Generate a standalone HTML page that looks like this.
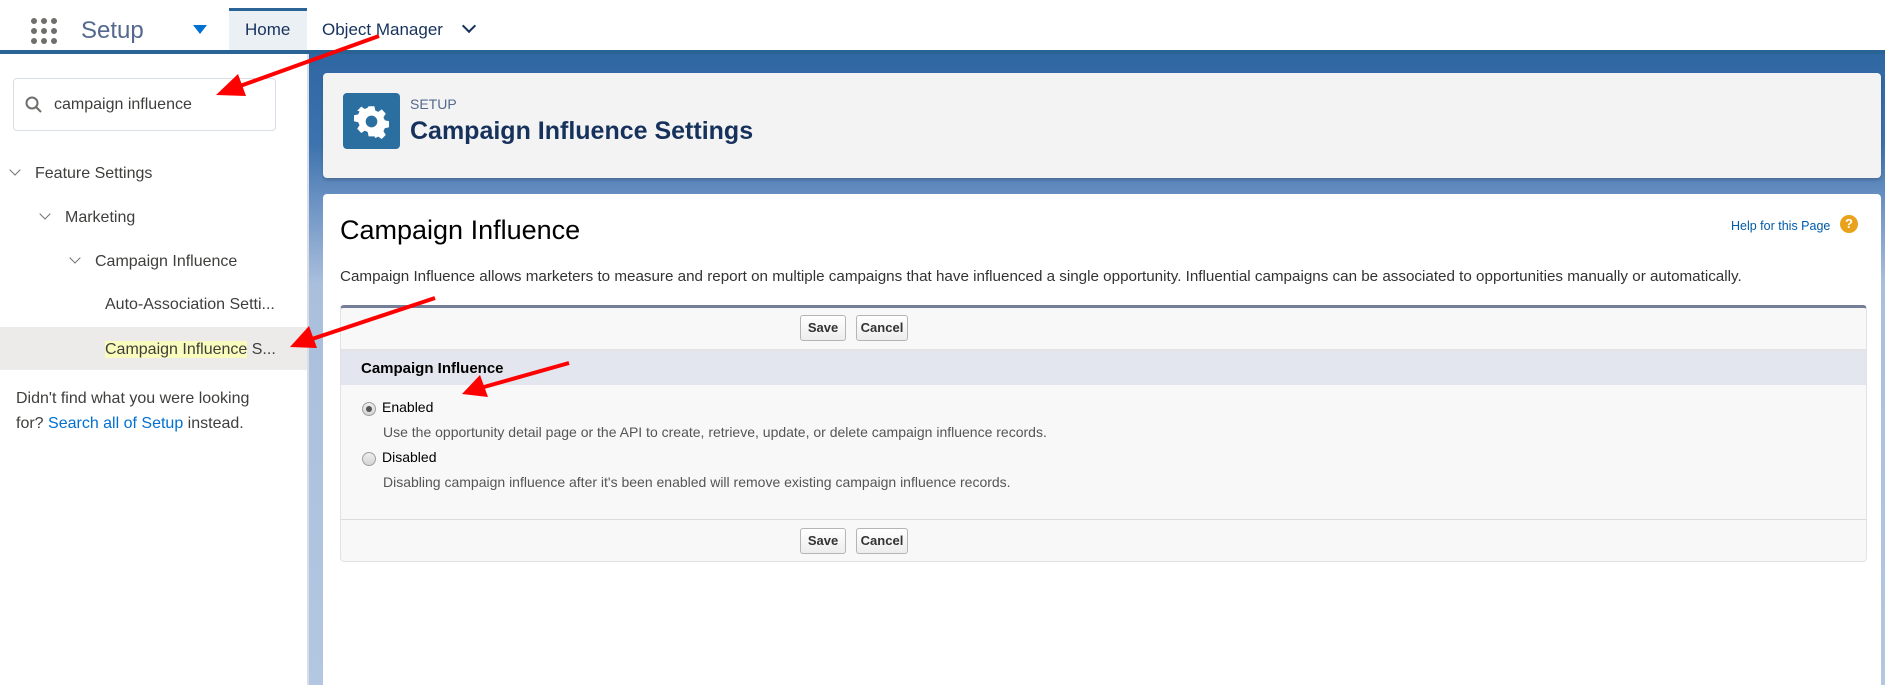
<!DOCTYPE html>
<html><head><meta charset="utf-8"><style>
*{margin:0;padding:0;box-sizing:border-box}
body{width:1885px;height:685px;overflow:hidden;background:#fff;font-family:"Liberation Sans",Arial,sans-serif;position:relative}
.abs{position:absolute}
.nav{left:0;top:0;width:1885px;height:54px;background:#fff;border-bottom:4px solid #2a6496}
.dot{position:absolute;width:6px;height:6px;border-radius:50%;background:#706e6b}
.side{left:0;top:54px;width:307px;height:631px;background:#fff}
.t{position:absolute;font-size:16px;color:#3e3e3c;white-space:nowrap}
.chev{position:absolute;width:8px;height:8px;border-right:1.5px solid #706e6b;border-bottom:1.5px solid #706e6b;transform:rotate(45deg)}
.bg{left:309px;top:54px;width:1576px;height:631px;background:linear-gradient(#2f67a3 0,#3d73ae 90px,#6d93c4 150px,#a9bfdc 230px,#b3c7e0 631px)}
.btn{position:absolute;height:26px;border:1px solid #b5b5b5;border-radius:3px;background:linear-gradient(#fff,#ededed);font-size:13px;font-weight:bold;color:#333;text-align:center;line-height:24px}
.radio{position:absolute;width:14px;height:14px;border-radius:50%;border:1px solid #a0a0a0;background:linear-gradient(#eee,#d5d5d5)}
.g{position:absolute;font-size:14px;color:#555;white-space:nowrap}
</style></head><body>
<div class="abs nav">
  <div class="dot" style="left:31px;top:18px"></div><div class="dot" style="left:41px;top:18px"></div><div class="dot" style="left:51px;top:18px"></div>
  <div class="dot" style="left:31px;top:28px"></div><div class="dot" style="left:41px;top:28px"></div><div class="dot" style="left:51px;top:28px"></div>
  <div class="dot" style="left:31px;top:38px"></div><div class="dot" style="left:41px;top:38px"></div><div class="dot" style="left:51px;top:38px"></div>
  <div class="abs" style="left:81px;top:17px;font-size:24px;color:#54698d">Setup</div>
  <div class="abs" style="left:193px;top:25px;width:0;height:0;border-left:7px solid transparent;border-right:7px solid transparent;border-top:9px solid #0070d2"></div>
  <div class="abs" style="left:229px;top:8px;width:78px;height:42px;background:#eaf0f4;border-top:3px solid #2a6496"></div>
  <div class="abs" style="left:245px;top:20px;font-size:17px;color:#16325c">Home</div>
  <div class="abs" style="left:322px;top:20px;font-size:17px;color:#16325c">Object Manager</div>
  <div class="abs" style="left:464px;top:21px;width:10px;height:10px;border-right:2px solid #16325c;border-bottom:2px solid #16325c;transform:rotate(45deg)"></div>
</div>
<div class="abs side">
  <div class="abs" style="left:13px;top:24px;width:263px;height:53px;border:1px solid #d8dde6;border-radius:4px"></div>
  <svg class="abs" style="left:25px;top:42px" width="18" height="18" viewBox="0 0 18 18"><circle cx="7" cy="7" r="5.5" fill="none" stroke="#706e6b" stroke-width="2"/><path d="M11 11l5 5" stroke="#706e6b" stroke-width="2"/></svg>
  <div class="t" style="left:54px;top:42px">campaign influence</div>
  <div class="chev" style="left:11px;top:112px"></div><div class="t" style="left:35px;top:111px">Feature Settings</div>
  <div class="chev" style="left:41px;top:156px"></div><div class="t" style="left:65px;top:155px">Marketing</div>
  <div class="chev" style="left:71px;top:200px"></div><div class="t" style="left:95px;top:199px">Campaign Influence</div>
  <div class="t" style="left:105px;top:242px">Auto-Association Setti...</div>
  <div class="abs" style="left:0;top:273px;width:307px;height:43px;background:#ecebea"></div>
  <div class="t" style="left:105px;top:287px"><span style="background:#f9fcbd">Campaign Influence</span> S...</div>
  <div class="t" style="left:16px;top:332px;line-height:25px">Didn't find what you were looking<br>for? <span style="color:#0070d2">Search all of Setup</span> instead.</div>
</div>
<div class="abs bg"></div>
<div class="abs" style="left:307px;top:54px;width:2px;height:631px;background:#d8dde6"></div>
<div class="abs" style="left:323px;top:73px;width:1558px;height:105px;background:#f3f3f3;border-radius:4px;box-shadow:0 2px 3px rgba(0,0,0,.2)"></div>
<div class="abs" style="left:343px;top:93px;width:57px;height:56px;background:#2a6f9f;border-radius:4px"></div>
<svg class="abs" style="left:354px;top:104px" width="35" height="35" viewBox="0 0 24 24"><path fill="#fff" d="M10 2h4l.6 2.8 2 .9 2.4-1.6 2.8 2.8-1.6 2.4.9 2 2.9.7v4l-2.9.6-.9 2 1.6 2.4-2.8 2.8-2.4-1.6-2 .9L14 22h-4l-.6-2.9-2-.9L5 19.8 2.200 17l1.6-2.4-.9-2L0 12v-4l2.9-.6.9-2L2.2 5 5 2.2l2.4 1.6 2-.9z" transform="translate(0 -.5) scale(1 1.03)"/><circle cx="12" cy="12" r="4" fill="#2a6f9f"/></svg>
<div class="abs" style="left:410px;top:96px;font-size:14px;color:#54698d">SETUP</div>
<div class="abs" style="left:410px;top:117px;font-size:25px;font-weight:bold;color:#16325c">Campaign Influence Settings</div>
<div class="abs" style="left:323px;top:194px;width:1558px;height:491px;background:#fff;border-radius:4px 4px 0 0"></div>
<div class="abs" style="left:340px;top:215px;font-size:27px;color:#000">Campaign Influence</div>
<div class="abs" style="left:1731px;top:219px;font-size:12.5px;color:#015ba7">Help for this Page</div>
<div class="abs" style="left:1840px;top:215px;width:18px;height:18px;border-radius:50%;background:#e8a21b;color:#fff;font-size:13px;font-weight:bold;text-align:center;line-height:18px">?</div>
<div class="abs" style="left:340px;top:268px;font-size:15.2px;color:#333;white-space:nowrap">Campaign Influence allows marketers to measure and report on multiple campaigns that have influenced a single opportunity. Influential campaigns can be associated to opportunities manually or automatically.</div>
<div class="abs" style="left:340px;top:305px;width:1527px;height:257px;background:#f8f8f8;border:1px solid #e0e3e5;border-top:3px solid #747e96;border-radius:4px"></div>
<div class="btn" style="left:800px;top:315px;width:46px">Save</div>
<div class="btn" style="left:856px;top:315px;width:52px">Cancel</div>
<div class="abs" style="left:341px;top:349px;width:1525px;height:2px;background:#e3e3e3"></div>
<div class="abs" style="left:341px;top:351px;width:1525px;height:34px;background:#e3e6ee"></div>
<div class="abs" style="left:361px;top:360px;font-size:15px;font-weight:bold;color:#000">Campaign Influence</div>
<div class="radio" style="left:362px;top:402px"><div style="position:absolute;left:3px;top:3px;width:6px;height:6px;border-radius:50%;background:#555"></div></div>
<div class="abs" style="left:382px;top:399px;font-size:14px;color:#000">Enabled</div>
<div class="g" style="left:383px;top:424px">Use the opportunity detail page or the API to create, retrieve, update, or delete campaign influence records.</div>
<div class="radio" style="left:362px;top:452px"></div>
<div class="abs" style="left:382px;top:449px;font-size:14px;color:#000">Disabled</div>
<div class="g" style="left:383px;top:474px">Disabling campaign influence after it's been enabled will remove existing campaign influence records.</div>
<div class="abs" style="left:341px;top:519px;width:1525px;height:1px;background:#dcdcdc"></div>
<div class="btn" style="left:800px;top:528px;width:46px">Save</div>
<div class="btn" style="left:856px;top:528px;width:52px">Cancel</div>
<svg class="abs" style="left:0;top:0" width="1885" height="685">
<g stroke="#f00" stroke-width="4" fill="#f00">
<line x1="379" y1="36" x2="240" y2="86"/><polygon points="216,95 238,74 246,96" stroke="none"/>
<line x1="435" y1="298" x2="312" y2="339"/><polygon points="290,347 309,326 317,348" stroke="none"/>
<line x1="569" y1="363" x2="484" y2="387"/><polygon points="462,394 480,375 488,397" stroke="none"/>
</g></svg>
</body></html>
